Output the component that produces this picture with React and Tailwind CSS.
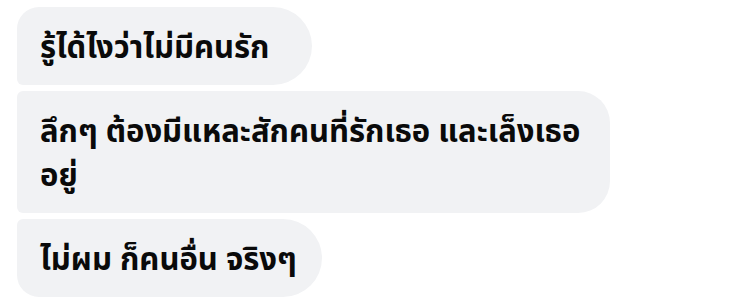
const messages = [
  { id: 1, lines: ['รู้ได้ไงว่าไม่มีคนรัก'], width: 'w-[295px]', shape: 'rounded-tl-[22px] rounded-bl-[6px] rounded-r-[39px]' },
  { id: 2, lines: ['ลึกๆ ต้องมีแหละสักคนที่รักเธอ และเล็งเธอ', 'อยู่'], width: 'w-[593px]', shape: 'rounded-l-[6px] rounded-r-[32px]' },
  { id: 3, lines: ['ไม่ผม ก็คนอื่น จริงๆ'], width: 'w-[305px]', shape: 'rounded-tl-[6px] rounded-bl-[22px] rounded-r-[39px]' },
];

export default function App() {
  return (
    <div className="w-[732px] h-[307px] bg-white pt-[7px] pl-[17px] flex flex-col gap-[6px] font-['Noto_Sans','Noto_Sans_Thai',sans-serif]">
      {messages.map((m) => (
        <div
          key={m.id}
          className={`${m.width} ${m.shape} bg-[#f1f2f4] px-[23px] py-[17px] text-[31px] leading-[44px] font-bold text-[#0a0a0a] whitespace-nowrap`}
        >
          {m.lines.map((l, i) => (
            <div key={i}>{l}</div>
          ))}
        </div>
      ))}
    </div>
  );
}
